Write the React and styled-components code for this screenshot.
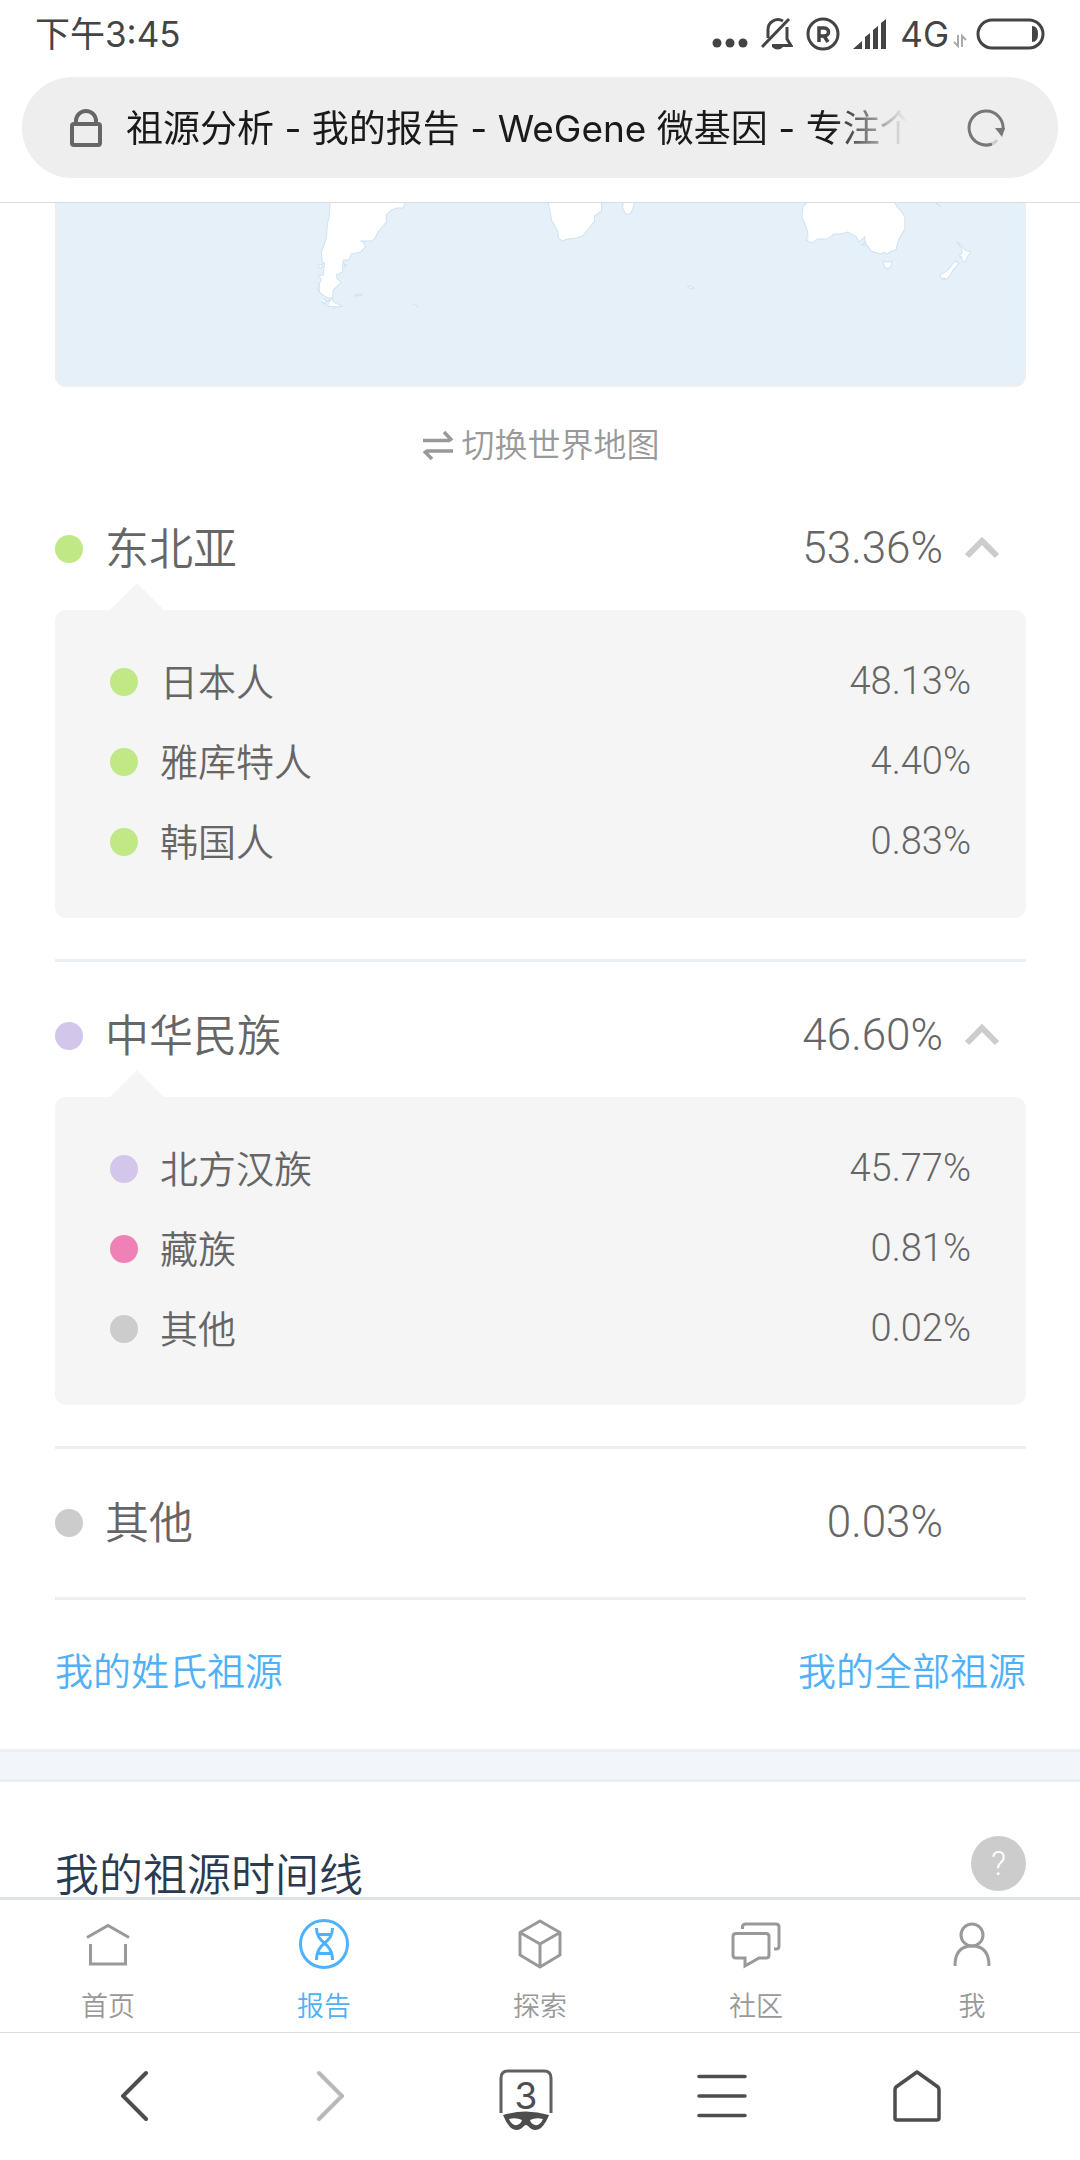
import React, { useState } from 'react';
import styled, { createGlobalStyle, ThemeProvider } from 'styled-components';

const theme = {
  color: {
    ink: '#444',
    text: '#666',
    muted: '#999',
    faint: '#ccc',
    accent: '#4fb1f9',
    heading: '#2a3a52',
    line: '#ebeff2',
    panel: '#f5f5f5',
    sea: '#e5f0f9',
    coast: '#cfe2f1',
  },
  font: {
    system: 'Inter, "Noto Sans CJK SC", sans-serif',
    page: 'Roboto, "Noto Sans CJK SC", sans-serif',
  },
};

const GlobalStyle = createGlobalStyle`
  * {
    box-sizing: border-box;
  }

  body {
    margin: 0;
    background: #fff;
  }

  button {
    border: 0;
    padding: 0;
    background: none;
    color: inherit;
    font: inherit;
    cursor: pointer;
  }

  svg {
    display: block;
    flex-shrink: 0;
  }
`;

const Screen = styled.div`
  display: flex;
  flex-direction: column;
  height: 100vh;
  color: ${(prop) => prop.theme.color.text};
  font-family: ${(prop) => prop.theme.font.page};
  font-weight: 350;
`;

/* Browser header */

const Header = styled.header`
  border-bottom: 1px solid #ddd;
  padding-bottom: 24px;
  font-family: ${(prop) => prop.theme.font.system};
  font-weight: 400;
`;

const StatusBar = styled.div`
  display: flex;
  align-items: center;
  justify-content: space-between;
  height: 77px;
  padding: 0 35px 10px;
  color: ${(prop) => prop.theme.color.ink};
  font-size: 35px;
`;

const Clock = styled.span`
  padding-bottom: 4px;
`;

const StatusIcons = styled.div`
  display: flex;
  align-items: center;
  gap: 13px;
`;

const Network = styled.span`
  display: flex;
  align-items: flex-end;
  gap: 4px;
  margin-right: -4px;
  line-height: 34px;
`;

const AddressBar = styled.div`
  display: flex;
  align-items: center;
  height: 101px;
  margin: 0 22px;
  border-radius: 51px;
  padding: 0 53px 0 48px;
  background: #eee;
`;

const Address = styled.input`
  flex: 1;
  min-width: 0;
  margin: 0 60px 0 24px;
  border: 0;
  padding: 2px 0 0;
  outline: 0;
  background: none;
  color: #1a1a1a;
  font-family: inherit;
  font-size: 37px;
  line-height: 56px;
  mask-image: linear-gradient(to right, #000 calc(100% - 76px), transparent);
`;

/* Report */

const Main = styled.main`
  flex: 1;
  min-height: 0;
  overflow: hidden;
`;

const Card = styled.section`
  padding: 0 54px 0 55px;
`;

const MapFrame = styled.div`
  height: 184px;
  border: 3px solid ${(prop) => prop.theme.color.line};
  border-top: 0;
  border-radius: 0 0 11px 11px;
  overflow: hidden;
  background: ${(prop) => prop.theme.color.sea};
`;

const MapToggle = styled.button`
  display: flex;
  align-items: center;
  justify-content: center;
  gap: 8px;
  width: 100%;
  height: 88px;
  padding-top: 28px;
  color: ${(prop) => prop.theme.color.muted};
  font-size: 33px;

  span {
    padding-bottom: 4px;
  }
`;

const Region = styled.div`
  border-bottom: 3px solid ${(prop) => prop.theme.color.line};
  padding-bottom: ${(prop) => (prop.$open ? 41 : 0)}px;
`;

const RegionRow = styled.button`
  display: flex;
  align-items: center;
  width: 100%;
  height: 148px;
  font-size: 44px;
  text-align: left;
`;

const Dot = styled.span`
  flex-shrink: 0;
  width: 28px;
  height: 28px;
  margin-right: 22px;
  border-radius: 50%;
  background: ${(prop) => prop.$color};
`;

const Name = styled.span`
  flex: 1;
  padding-bottom: 6px;
`;

const Percent = styled.span`
  padding-bottom: 2px;
  font-weight: 300;
`;

const ChevronSlot = styled.span`
  display: flex;
  width: 83px;
  padding-left: 21px;
`;

const Panel = styled.ul`
  position: relative;
  margin: -13px 0 0;
  border-radius: 11px;
  padding: 32px 55px 36px;
  background: ${(prop) => prop.theme.color.panel};
  font-size: 38px;
  list-style: none;

  &::before {
    content: '';
    position: absolute;
    bottom: 100%;
    left: 55px;
    border: solid transparent;
    border-width: 0 27px 27px;
    border-bottom-color: ${(prop) => prop.theme.color.panel};
  }
`;

const PanelRow = styled.li`
  display: flex;
  align-items: center;
  height: 80px;
`;

const Links = styled.nav`
  display: flex;
  align-items: center;
  justify-content: space-between;
  height: 149px;
  padding-bottom: 12px;
  font-size: 38px;

  a {
    color: ${(prop) => prop.theme.color.accent};
    text-decoration: none;
  }
`;

const Divider = styled.div`
  height: 33px;
  border: solid ${(prop) => prop.theme.color.line};
  border-width: 3px 0;
  background: #f2f5f9;
`;

const Timeline = styled(Card)`
  display: flex;
  align-items: flex-start;
  justify-content: space-between;
  padding-top: 54px;
`;

const Title = styled.h2`
  margin: 0;
  padding-top: 20px;
  color: ${(prop) => prop.theme.color.heading};
  font-size: 44px;
  font-weight: inherit;
  line-height: 40px;
`;

const Help = styled.button`
  width: 55px;
  height: 55px;
  border-radius: 50%;
  background: ${(prop) => prop.theme.color.faint};
  color: #fff;
  font-size: 33px;
  font-weight: 300;
  line-height: 55px;
`;

/* Bottom bars */

const TabBar = styled.nav`
  display: grid;
  grid-template-columns: repeat(5, 1fr);
  height: 135px;
  border-top: 3px solid #dfe3e8;
`;

const Tab = styled.a`
  display: flex;
  flex-direction: column;
  align-items: center;
  gap: 18px;
  padding-top: 19px;
  color: ${(prop) => (prop.$active ? prop.theme.color.accent : prop.theme.color.muted)};
  font-size: 27px;
  line-height: 40px;
  text-decoration: none;
`;

const BrowserBar = styled.div`
  display: grid;
  grid-template-columns: repeat(5, 1fr);
  height: 128px;
  border-top: 1px solid #ddd;
  padding: 0 65px 2px 37px;
`;

const BrowserButton = styled.button`
  position: relative;
  display: flex;
  align-items: center;
  justify-content: center;
  color: #4d4d4d;

  &:disabled {
    color: #b8b8b8;
  }
`;

const TabCount = styled.span`
  position: absolute;
  inset: 0;
  font-family: ${(prop) => prop.theme.font.system};
  font-size: 37px;
  font-weight: 400;
  line-height: 125px;
`;

const stroke = {
  fill: 'none', stroke: 'currentColor', strokeWidth: 3, 'aria-hidden': true,
};

const DotsIcon = () => (
  <svg width="36" height="32" fill="currentColor">
    <circle cx="5" cy="25" r="4.5" />
    <circle cx="18" cy="25" r="4.5" />
    <circle cx="31" cy="25" r="4.5" />
  </svg>
);

const MutedIcon = () => (
  <svg width="32" height="34" {...stroke}>
    <path d="M1 30 28 2" />
    <path d="M7 21V13a10 10 0 0 1 15-9" />
    <path d="M26 10v12l4 6.500H11" />
    <path d="M11 30h11q-5 5-11 0Z" fill="currentColor" stroke="none" />
  </svg>
);

const RegisteredIcon = () => (
  <svg width="34" height="34" {...stroke}>
    <circle cx="17" cy="17" r="15" />
    <path d="M13 25V11h5.500a3.500 3.500 0 0 1 0 8H13M18 19l4 6" strokeWidth="3.500" />
  </svg>
);

const SignalIcon = () => (
  <svg width="34" height="32" fill="currentColor">
    <path d="M0 31 9 23V31ZM12 31V19l5-4v16ZM20 31V12l5-4v23ZM28 31V5l5-4v30Z" />
  </svg>
);

const DataIcon = () => (
  <svg width="14" height="18" fill="none" stroke="#aaa" strokeWidth="2">
    <path d="M5 2v11L1 9M9 14V3l4 4" />
  </svg>
);

const BatteryIcon = () => (
  <svg width="69" height="32" {...stroke}>
    <rect x="2" y="2" width="65" height="28" rx="14" />
    <path d="M56 8q6 0 6 8t-6 8Z" fill="currentColor" stroke="none" />
  </svg>
);

const LockIcon = () => (
  <svg width="32" height="40" {...stroke} stroke="#666" strokeWidth="4">
    <rect x="2" y="16" width="28" height="21" rx="2" />
    <path d="M6 16v-3a10 10 0 0 1 20 0v3" />
  </svg>
);

const ReloadIcon = () => (
  <svg width="38" height="40" {...stroke} stroke="#777">
    <path d="M36 22A17 17 0 1 0 25 36" />
    <path d="M25 36q3-1 5-4" stroke="#ccc" />
    <path d="M28 20h10l-3 9Z" fill="#777" stroke="none" />
  </svg>
);

const SwapIcon = () => (
  <svg width="32" height="30" {...stroke}>
    <path d="M1 10.500H28M22 2l8 8.500" strokeWidth="3.500" />
    <path d="M31 21H4M10 29l-8-8" strokeWidth="3.500" />
  </svg>
);

const ChevronIcon = ({ open }) => (
  <svg width="36" height="24" fill="none" stroke="#ccc" strokeWidth="6">
    <path d={open ? 'M3 19 18 4l15 15' : 'M3 4l15 15L33 4'} />
  </svg>
);

const WorldMap = () => (
  <svg
    width="100%"
    height="100%"
    viewBox="58 203 964 181"
    preserveAspectRatio="xMidYMin slice"
    fill="#fff"
    stroke={theme.color.coast}
    role="img"
    aria-label="世界地图"
  >
    {/* South America */}
    <path d="M330 200 329 216 327 225 326 238 323 247 321 252 322 262 324 263 323 275 318 276 321 279 319 284 319 292 323 295 327 298 332 298 333 290 337 286 341 282 337 279 336 275 342 272 343 260 349 260 351 254 360 252 365 247 363 242 360 241 371 241 375 238 377 233 381 228 386 222 386 215 391 210 397 208 403 208 406 200Z" />
    <path d="M331 299 335 303 342 306 337 307 328 306 321 302 325 303ZM322 298l4 3 4-1-2 4-6-2M317 283l2 2-2 3 2 4M319 264l3 1-1 3-3-1ZM334 307v2M344 264l2 1-1 2ZM354 296l3-2 2 1-3 1ZM359 295l3-1-1 2ZM413 304l3 1 2 2" />
    {/* Africa */}
    <path d="M547 200 549 208 551 220 557 231 558 238 562 241 567 239 576 238 582 236 588 229 594 221 594 216 601 211 601 200ZM623 200 622 208 625 214 629 214 632 210 634 200Z" />
    {/* Australia */}
    <path d="M809 200 802 207 801 217 805 226 807 233 807 238 805 240 811 243 817 239 827 239 833 234 840 234 847 232 850 234 855 236 858 242 864 237 864 243 867 246 870 251 880 254 883 252 886 254 891 251 895 250 898 239 904 229 904 217 901 212 897 208 892 200ZM861 245l4-3v3ZM882 261l5 1 4-1-1 5-3 3-3-2Z" />
    {/* New Zealand */}
    <path d="M956 242 959 244 963 249 966 251 970 252 967 256 964 262 961 260 961 257 958 256 961 253 961 249ZM954 261l4 2-3 4-3 3-2 4-4 5-6-1-1-3 5-3 4-3ZM941 279h3M934 202l6 5M687 286l3 0 3 2-3 1Z" />
  </svg>
);

const TabHomeIcon = () => (
  <svg width="50" height="50" {...stroke}>
    <path d="M4 18.500 25 6.500l21 12M7.500 25v20h35V25" />
  </svg>
);

const ReportIcon = () => (
  <svg width="50" height="50" {...stroke}>
    <circle cx="25" cy="25" r="23.500" />
    <path d="M17.500 9c0 17 16 13 16 32M33.500 9c0 17-16 13-16 32M19 15.500h13M19 34.500h13" />
  </svg>
);

const ExploreIcon = () => (
  <svg width="50" height="50" {...stroke} strokeLinejoin="round">
    <path d="M25 2 45 13.500V36L25 48 5 36V13.500ZM5 13.500 25 25l20-11.500M25 25v23" />
  </svg>
);

const CommunityIcon = () => (
  <svg width="50" height="50" {...stroke}>
    <path d="M4 14.500h31q3 0 3 3V36q0 3-3 3H28L14 47V39H5q-3 0-3-3V17.500q0-3 3-3Z" />
    <path d="M11.500 10V8q0-3 3-3H45q3 0 3 3v19q0 3-3 3h-2" />
  </svg>
);

const MeIcon = () => (
  <svg width="50" height="50" {...stroke}>
    <circle cx="25" cy="16" r="11" />
    <path d="M8 47q0-20 17-20t17 20" />
  </svg>
);

const BackIcon = () => (
  <svg width="28" height="52" {...stroke} strokeWidth="4" strokeLinecap="round">
    <path d="M25 3 2 26l23 23" />
  </svg>
);

const ForwardIcon = () => (
  <svg width="28" height="52" {...stroke} strokeWidth="4" strokeLinecap="round">
    <path d="M3 3l23 23L3 49" />
  </svg>
);

// incognito tab switcher: open frame with a mask on its lower edge
const TabsIcon = () => (
  <svg width="54" height="70" viewBox="0 -8 54 70" {...stroke}>
    <path d="M2 44V9q0-7 7-7h36q7 0 7 7v35" stroke="#606060" />
    <path
      d="M4 46q23-7 46 0-3 8-8 13-7 5-13-2-2-2-4 0-6 7-13 2-5-5-8-13ZM10 50q3 7 8 6 4-1 5-5-6-3-13-1ZM44 50q-3 7-8 6-4-1-5-5 6-3 13-1Z"
      fill="currentColor"
      fillRule="evenodd"
      stroke="none"
    />
  </svg>
);

const MenuIcon = () => (
  <svg width="50" height="46" {...stroke} strokeWidth="3.500" strokeLinecap="round">
    <path d="M2 3.500h46M2 23h46M2 42.500h46" />
  </svg>
);

const HomeIcon = () => (
  <svg width="50" height="54" {...stroke} strokeWidth="3.500" strokeLinejoin="round">
    <path d="M25 3 46 18q1 1 1 3v28q0 2-2 2H5q-2 0-2-2V21q0-2 1-3Z" />
  </svg>
);

const GREEN = '#c0e884';
const PURPLE = '#d2c6ea';
const PINK = '#ef81b7';
const GREY = '#ccc';

const regions = [
  {
    name: '东北亚',
    percent: '53.36%',
    color: GREEN,
    groups: [
      { name: '日本人', percent: '48.13%', color: GREEN },
      { name: '雅库特人', percent: '4.40%', color: GREEN },
      { name: '韩国人', percent: '0.83%', color: GREEN },
    ],
  },
  {
    name: '中华民族',
    percent: '46.60%',
    color: PURPLE,
    groups: [
      { name: '北方汉族', percent: '45.77%', color: PURPLE },
      { name: '藏族', percent: '0.81%', color: PINK },
      { name: '其他', percent: '0.02%', color: GREY },
    ],
  },
  {
    name: '其他', percent: '0.03%', color: GREY, groups: [],
  },
];

const tabs = [
  { label: '首页', Icon: TabHomeIcon },
  { label: '报告', Icon: ReportIcon, active: true },
  { label: '探索', Icon: ExploreIcon },
  { label: '社区', Icon: CommunityIcon },
  { label: '我', Icon: MeIcon },
];

function Ancestry({ region }) {
  const {
    name, percent, color, groups,
  } = region;
  const [expanded, setExpanded] = useState(true);
  const hasGroups = groups.length > 0;
  const open = hasGroups && expanded;

  return (
    <Region $open={open}>
      <RegionRow
        type="button"
        aria-expanded={hasGroups ? open : undefined}
        onClick={() => setExpanded(!expanded)}
      >
        <Dot $color={color} />
        <Name>{name}</Name>
        <Percent>{percent}</Percent>
        <ChevronSlot>{hasGroups && <ChevronIcon open={open} />}</ChevronSlot>
      </RegionRow>
      {open && (
        <Panel>
          {groups.map((group) => (
            <PanelRow key={group.name}>
              <Dot $color={group.color} />
              <Name>{group.name}</Name>
              <Percent>{group.percent}</Percent>
            </PanelRow>
          ))}
        </Panel>
      )}
    </Region>
  );
}

export default function App() {
  return (
    <ThemeProvider theme={theme}>
      <GlobalStyle />
      <Screen>
        <Header>
          <StatusBar>
            <Clock>下午3:45</Clock>
            <StatusIcons>
              <DotsIcon />
              <MutedIcon />
              <RegisteredIcon />
              <SignalIcon />
              <Network>
                4G
                <DataIcon />
              </Network>
              <BatteryIcon />
            </StatusIcons>
          </StatusBar>
          <AddressBar>
            <LockIcon />
            <Address
              readOnly
              aria-label="网址"
              value="祖源分析 - 我的报告 - WeGene 微基因 - 专注个"
            />
            <button type="button" aria-label="刷新"><ReloadIcon /></button>
          </AddressBar>
        </Header>

        <Main>
          <Card>
            <MapFrame><WorldMap /></MapFrame>
            <MapToggle type="button">
              <SwapIcon />
              <span>切换世界地图</span>
            </MapToggle>
            {regions.map((region) => <Ancestry key={region.name} region={region} />)}
            <Links>
              <a href="#surname">我的姓氏祖源</a>
              <a href="#all">我的全部祖源</a>
            </Links>
          </Card>
          <Divider />
          <Timeline>
            <Title>我的祖源时间线</Title>
            <Help type="button">?</Help>
          </Timeline>
        </Main>

        <TabBar>
          {tabs.map(({ label, Icon, active }) => (
            <Tab key={label} href="#tab" $active={active}>
              <Icon />
              {label}
            </Tab>
          ))}
        </TabBar>
        <BrowserBar>
          <BrowserButton type="button" aria-label="后退"><BackIcon /></BrowserButton>
          <BrowserButton type="button" aria-label="前进" disabled><ForwardIcon /></BrowserButton>
          <BrowserButton type="button">
            <TabsIcon />
            <TabCount>3</TabCount>
          </BrowserButton>
          <BrowserButton type="button" aria-label="菜单"><MenuIcon /></BrowserButton>
          <BrowserButton type="button" aria-label="主页"><HomeIcon /></BrowserButton>
        </BrowserBar>
      </Screen>
    </ThemeProvider>
  );
}
